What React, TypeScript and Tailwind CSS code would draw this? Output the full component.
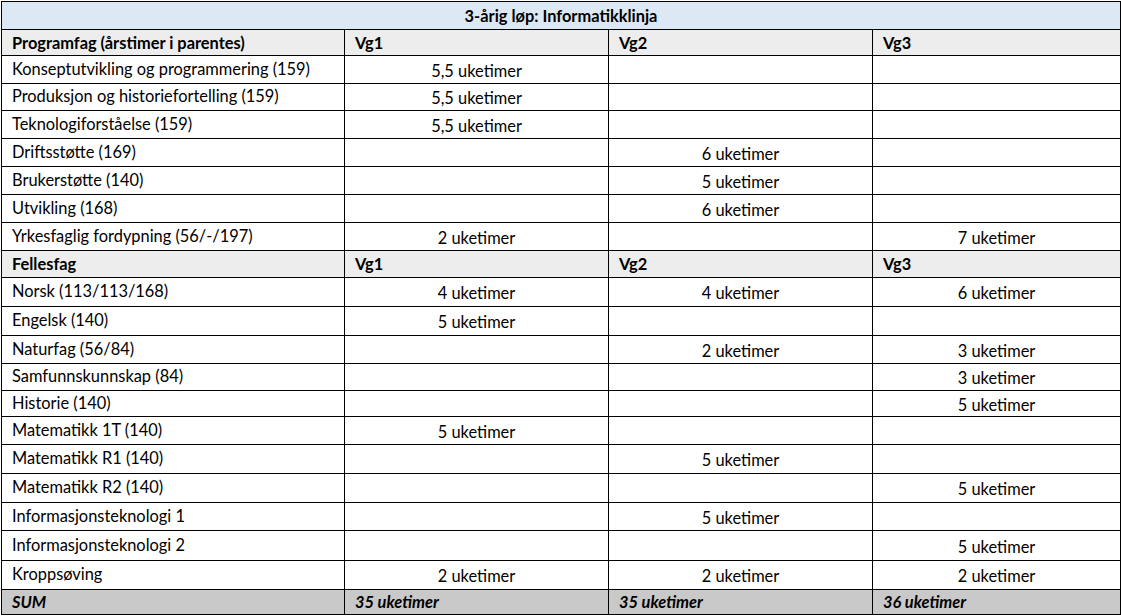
type Row = { name: string; vals: [string, string, string]; h: number };

const programfag: Row[] = [
  { name: 'Konseptutvikling og programmering (159)', vals: ['5,5 uketimer', '', ''], h: 28 },
  { name: 'Produksjon og historiefortelling (159)', vals: ['5,5 uketimer', '', ''], h: 27 },
  { name: 'Teknologiforståelse (159)', vals: ['5,5 uketimer', '', ''], h: 28 },
  { name: 'Driftsstøtte (169)', vals: ['', '6 uketimer', ''], h: 28 },
  { name: 'Brukerstøtte (140)', vals: ['', '5 uketimer', ''], h: 28 },
  { name: 'Utvikling (168)', vals: ['', '6 uketimer', ''], h: 28 },
  { name: 'Yrkesfaglig fordypning (56/-/197)', vals: ['2 uketimer', '', '7 uketimer'], h: 28 },
];

const fellesfag: Row[] = [
  { name: 'Norsk (113/113/168)', vals: ['4 uketimer', '4 uketimer', '6 uketimer'], h: 29 },
  { name: 'Engelsk (140)', vals: ['5 uketimer', '', ''], h: 29 },
  { name: 'Naturfag (56/84)', vals: ['', '2 uketimer', '3 uketimer'], h: 28 },
  { name: 'Samfunnskunnskap (84)', vals: ['', '', '3 uketimer'], h: 27 },
  { name: 'Historie (140)', vals: ['', '', '5 uketimer'], h: 26 },
  { name: 'Matematikk 1T (140)', vals: ['5 uketimer', '', ''], h: 28 },
  { name: 'Matematikk R1 (140)', vals: ['', '5 uketimer', ''], h: 29 },
  { name: 'Matematikk R2 (140)', vals: ['', '', '5 uketimer'], h: 29 },
  { name: 'Informasjonsteknologi 1', vals: ['', '5 uketimer', ''], h: 28 },
  { name: 'Informasjonsteknologi 2', vals: ['', '', '5 uketimer'], h: 30 },
  { name: 'Kroppsøving', vals: ['2 uketimer', '2 uketimer', '2 uketimer'], h: 29 },
];

function HeaderRow({ label, h }: { label: string; h: number }) {
  return (
    <tr className="bg-[#ededed] font-bold" style={{ height: h }}>
      <td className="border border-black pl-[10px] align-middle">{label}</td>
      <td className="border border-black pl-[10px] align-middle">Vg1</td>
      <td className="border border-black pl-[10px] align-middle">Vg2</td>
      <td className="border border-black pl-[10px] align-middle">Vg3</td>
    </tr>
  );
}

function SubjectRow({ row }: { row: Row }) {
  return (
    <tr style={{ height: row.h }}>
      <td className="border border-black pl-[10px] pb-[2px] align-middle">{row.name}</td>
      {row.vals.map((v, i) => (
        <td key={i} className="border border-black pt-[2px] text-center align-middle">
          {v}
        </td>
      ))}
    </tr>
  );
}

export default function App() {
  return (
    <div className="w-[1121px] h-[616px] bg-white pl-[1px] pt-[1px]">
      <table
        className="border-collapse table-fixed w-[1119px] text-[16.4px] leading-[18px] text-black"
        style={{ fontFamily: 'Lato, "Open Sans", sans-serif' }}
      >
        <colgroup>
          <col className="w-[343px]" />
          <col className="w-[264px]" />
          <col className="w-[264px]" />
          <col className="w-[248px]" />
        </colgroup>
        <tbody>
          <tr className="h-[28px] bg-[#dde8f5]">
            <td colSpan={4} className="border border-black text-center font-bold align-middle">
              3-årig løp: Informatikklinja
            </td>
          </tr>
          <HeaderRow label="Programfag (årstimer i parentes)" h={26} />
          {programfag.map((r) => (
            <SubjectRow key={r.name} row={r} />
          ))}
          <HeaderRow label="Fellesfag" h={27} />
          {fellesfag.map((r) => (
            <SubjectRow key={r.name} row={r} />
          ))}
          <tr className="h-[25px] bg-[#c9c9c9] font-bold italic">
            <td className="border border-black pl-[10px] align-middle">SUM</td>
            <td className="border border-black pl-[10px] align-middle">35 uketimer</td>
            <td className="border border-black pl-[10px] align-middle">35 uketimer</td>
            <td className="border border-black pl-[10px] align-middle">36 uketimer</td>
          </tr>
        </tbody>
      </table>
    </div>
  );
}
